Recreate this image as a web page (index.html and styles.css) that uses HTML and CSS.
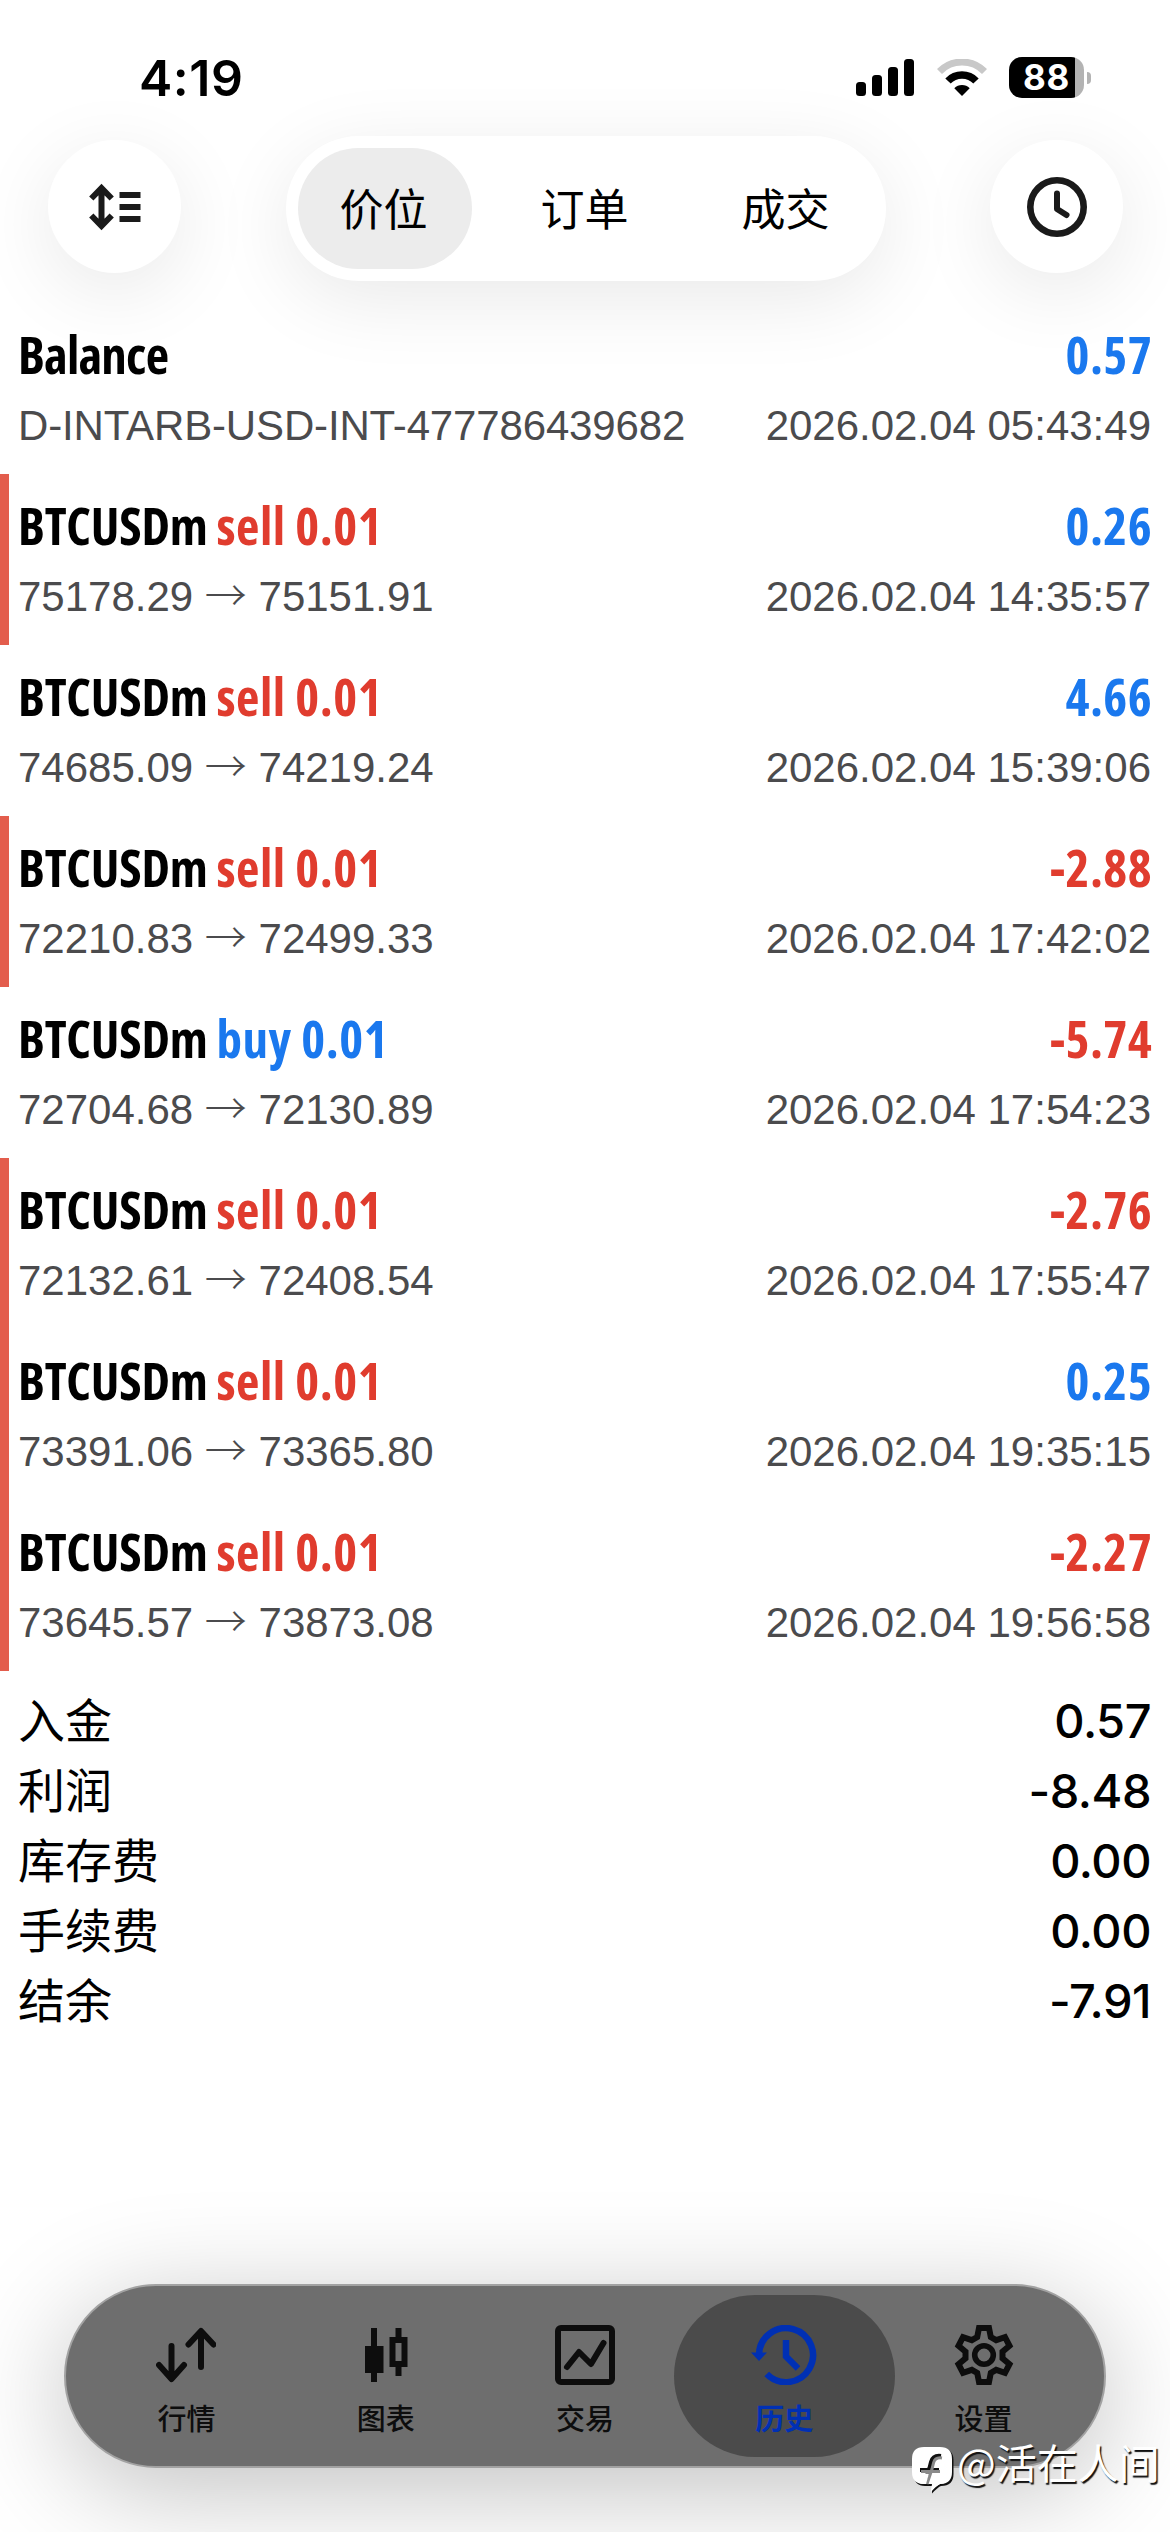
FILE: index.html
```html
<!DOCTYPE html>
<html lang="zh-CN">
<head>
<meta charset="utf-8">
<title>历史</title>
<link rel="stylesheet" href="styles.css">
</head>
<body>
<div class="phone">
  <div class="status">
    <span class="time">4:19</span>
    <div class="status-icons">
      <svg class="signal" width="58" height="37" viewBox="0 0 58 37"><rect x="0" y="23" width="10" height="14" rx="3.500"/><rect x="16" y="16" width="10" height="21" rx="3.500"/><rect x="32" y="8" width="10" height="29" rx="3.500"/><rect x="48" y="0" width="10" height="37" rx="3.500"/></svg>
      <svg class="wifi" width="50" height="37" viewBox="0 0 50 37"><path d="M2.500 12.500A31.500 31.500 0 0 1 47.500 12.500" fill="none" stroke="#c8c8c8" stroke-width="7"/><path d="M11 22A19.500 19.500 0 0 1 39 22" fill="none" stroke="#000" stroke-width="7.500"/><path d="M25 37L17.300 29.200A11 11 0 0 1 32.700 29.200Z"/></svg>
      <div class="battery"><div class="cell"><span class="pct">88</span></div><i class="nub"></i></div>
    </div>
  </div>

  <header class="topbar">
    <button class="round"><svg width="52" height="48" viewBox="0 0 52 48"><path d="M12.500 4V44M2.300 15.500L12.500 5L22.700 15.500M2.300 32.500L12.500 43L22.700 32.500" fill="none" stroke="#1a1a1a" stroke-width="6"/><path d="M30.500 9h21v6h-21zM30.500 21h21v6h-21zM30.500 33h21v6h-21z" fill="#1a1a1a"/></svg></button>
    <nav class="segments"><span class="seg on">价位</span><span class="seg">订单</span><span class="seg">成交</span></nav>
    <button class="round"><svg width="60" height="60" viewBox="0 0 60 60"><circle cx="30" cy="30" r="26.700" fill="none" stroke="#1a1a1a" stroke-width="6.600"/><path d="M30 16.500V32L39.500 38" fill="none" stroke="#1a1a1a" stroke-width="6" stroke-linecap="round" stroke-linejoin="round"/></svg></button>
  </header>

  <main class="deals">
    <div class="deal"><div class="line main"><span class="kind">Balance</span><span class="pos">0.57</span></div><div class="line sub"><span class="ref">D-INTARB-USD-INT-477786439682</span><span>2026.02.04 05:43:49</span></div></div>
    <div class="deal mark"><div class="line main"><span>BTCUSDm <em class="neg">sell 0.01</em></span><span class="pos">0.26</span></div><div class="line sub"><span>75178.29 <i class="to">→</i> 75151.91</span><span>2026.02.04 14:35:57</span></div></div>
    <div class="deal"><div class="line main"><span>BTCUSDm <em class="neg">sell 0.01</em></span><span class="pos">4.66</span></div><div class="line sub"><span>74685.09 <i class="to">→</i> 74219.24</span><span>2026.02.04 15:39:06</span></div></div>
    <div class="deal mark"><div class="line main"><span>BTCUSDm <em class="neg">sell 0.01</em></span><span class="neg">-2.88</span></div><div class="line sub"><span>72210.83 <i class="to">→</i> 72499.33</span><span>2026.02.04 17:42:02</span></div></div>
    <div class="deal"><div class="line main"><span>BTCUSDm <em class="pos">buy 0.01</em></span><span class="neg">-5.74</span></div><div class="line sub"><span>72704.68 <i class="to">→</i> 72130.89</span><span>2026.02.04 17:54:23</span></div></div>
    <div class="deal mark"><div class="line main"><span>BTCUSDm <em class="neg">sell 0.01</em></span><span class="neg">-2.76</span></div><div class="line sub"><span>72132.61 <i class="to">→</i> 72408.54</span><span>2026.02.04 17:55:47</span></div></div>
    <div class="deal mark"><div class="line main"><span>BTCUSDm <em class="neg">sell 0.01</em></span><span class="pos">0.25</span></div><div class="line sub"><span>73391.06 <i class="to">→</i> 73365.80</span><span>2026.02.04 19:35:15</span></div></div>
    <div class="deal mark"><div class="line main"><span>BTCUSDm <em class="neg">sell 0.01</em></span><span class="neg">-2.27</span></div><div class="line sub"><span>73645.57 <i class="to">→</i> 73873.08</span><span>2026.02.04 19:56:58</span></div></div>
  </main>

  <section class="summary">
    <div class="total"><span>入金</span><b>0.57</b></div>
    <div class="total"><span>利润</span><b>-8.48</b></div>
    <div class="total"><span>库存费</span><b>0.00</b></div>
    <div class="total"><span>手续费</span><b>0.00</b></div>
    <div class="total"><span>结余</span><b>-7.91</b></div>
  </section>

  <nav class="tabs">
    <a class="tab"><svg width="60" height="60" viewBox="0 0 60 60"><g fill="none" stroke="#0d0d0d" stroke-width="6" stroke-linecap="round" stroke-linejoin="round"><path d="M15.500 21V53M3 40L15.500 54L28 40M45 42V7M32.500 19.500L45 6L57.500 19.500"/></g></svg><span>行情</span></a>
    <a class="tab"><svg width="60" height="60" viewBox="0 0 60 60"><path d="M15 3h6v18h6.500v27H21v9h-6v-9H9V21h6z" fill="#0d0d0d"/><path fill-rule="evenodd" d="M39.500 3h6v9h6v30h-6v9h-6v-9h-6V12h6zM39.500 18v18h6V18z" fill="#0d0d0d"/></svg><span>图表</span></a>
    <a class="tab"><svg width="60" height="60" viewBox="0 0 60 60"><rect x="3" y="3" width="54" height="54" rx="3" fill="none" stroke="#0d0d0d" stroke-width="6"/><path d="M12 42L24 27L36 39L48.500 18" fill="none" stroke="#0d0d0d" stroke-width="6" stroke-linecap="round" stroke-linejoin="round"/></svg><span>交易</span></a>
    <a class="tab on"><svg width="66" height="60" viewBox="0 0 66 60"><path d="M8 30A27 27 0 1 1 15.700 49" fill="none" stroke="#0030b4" stroke-width="6.500"/><path d="M0 27.500H16L8 36Z" fill="#0030b4"/><path d="M35 15V31.500L47 43.500" fill="none" stroke="#0030b4" stroke-width="6.500"/></svg><span>历史</span></a>
    <a class="tab"><svg width="60" height="60" viewBox="0 0 60 60"><path d="M25 3H35L36.800 12L42.200 15.200L51 12.200L55.500 20.800L48.500 26.700V33.300L55.500 39.200L51 47.800L42.200 44.800L36.800 48L35 57H25L23.200 48L17.800 44.800L9 47.800L4.500 39.200L11.500 33.300V26.700L4.500 20.800L9 12.200L17.800 15.200L23.200 12Z" fill="none" stroke="#0d0d0d" stroke-width="6"/><circle cx="30" cy="30" r="9.300" fill="none" stroke="#0d0d0d" stroke-width="5.600"/></svg><span>设置</span></a>
  </nav>

  <div class="watermark">
    <svg width="44" height="48" viewBox="0 0 44 48"><path d="M13 3.500H29Q41.500 3.500 41.500 15V29Q41.500 41 29 41Q26 42 20 48.500L20 41H13Q2 41 1.500 29V15Z" fill="#111"/><path d="M12 2H28Q40 2 40 14V27Q40 39 28 39Q24 41 19 47L20 39H12Q0 39 0 27V14Q0 2 12 2Z" fill="#fff"/><path d="M29 11Q21 10 19 17L17.500 23L13 36M8 25H27" fill="none" stroke="#111" stroke-width="4"/><path d="M30 13Q23 12 21.500 18L20 24L15 39M9 26.500H28" fill="none" stroke="#8a8a8a" stroke-width="3"/><path d="M9 28.500H17L14 39H12Q5 39 2 33V28.500ZM22 28.500H38V31Q36 39 28 39Q24 41 19 46Z" fill="#fff"/></svg>
    <span>@活在人间</span>
  </div>
</div>
</body>
</html>
```
FILE: styles.css
```css
* { box-sizing: border-box; }
body { margin: 0; background: #fff; }
.phone {
  position: relative;
  width: 1170px;
  height: 2532px;
  overflow: hidden;
  display: flex;
  flex-direction: column;
  background: #fff;
  color: #000;
  font-family: Inter, "Noto Sans CJK SC", sans-serif;
}
.status {
  height: 136px;
  padding: 57px 79px 0 139px;
  display: flex;
  justify-content: space-between;
  align-items: flex-start;
}
.time { font-size: 50px; font-weight: 600; line-height: 42px; letter-spacing: .5px; }
.status-icons { display: flex; align-items: center; height: 41px; }
.wifi { margin: 0 22px 0 23px; }
.battery { display: flex; align-items: center; gap: 3px; }
.cell {
  width: 75px;
  height: 41px;
  border-radius: 13px;
  background: linear-gradient(90deg, #000 66px, #b3b3b3 66px);
  color: #fff;
  padding-left: 14px;
}
.pct { font-size: 35px; font-weight: 700; line-height: 41px; letter-spacing: .8px; }
.nub { width: 4px; height: 12px; border-radius: 0 4px 4px 0; background: #b3b3b3; }

.topbar {
  height: 145px;
  padding: 0 47px 0 48px;
  display: flex;
  justify-content: space-between;
  align-items: flex-start;
}
.round {
  width: 133px;
  height: 133px;
  margin: 4px 0 0;
  padding: 0;
  border: 0;
  border-radius: 50%;
  background: #fff;
  box-shadow: 0 18px 80px rgba(0, 0, 0, .09);
  display: grid;
  place-items: center;
}
.segments {
  width: 600px;
  height: 145px;
  padding: 12px;
  border-radius: 73px;
  background: #fff;
  box-shadow: 0 18px 80px rgba(0, 0, 0, .09);
  display: flex;
  justify-content: space-between;
}
.seg {
  width: 174px;
  height: 121px;
  padding-right: 2px;
  border-radius: 61px;
  font-size: 44px;
  line-height: 124px;
  text-align: center;
}
.seg.on { background: #ececec; }

.deals { margin-top: 22px; }
.deal {
  height: 171px;
  padding: 21px 19px 0 9px;
  border-left: 9px solid transparent;
}
.deal.mark { border-left-color: #e35d4d; }
.line { display: flex; justify-content: space-between; white-space: nowrap; }
.main {
  height: 60px;
  font: 700 51px/60px "Open Sans", sans-serif;
  font-stretch: 75%;
  letter-spacing: -.2px;
}
.main .kind { letter-spacing: -.8px; }
.main em { font-style: normal; letter-spacing: .5px; }
.main > .pos, .main > .neg { letter-spacing: .4px; margin-right: -1px; }
.sub {
  height: 52px;
  margin-top: 16px;
  font: 42px/52px "Liberation Sans", "Noto Sans CJK SC", sans-serif;
  color: #4b4b4d;
}
.ref { letter-spacing: -.15px; }
.to { font: 300 42px/1px "Noto Sans CJK SC", sans-serif; }
.pos { color: #1a78ee; }
.neg { color: #e03c2e; }

.summary { margin-top: 15px; padding: 0 19px 0 18px; }
.total {
  height: 70px;
  display: flex;
  justify-content: space-between;
  font-size: 47px;
  line-height: 70px;
}
.total b { font-weight: 500; letter-spacing: -.5px; }

.tabs {
  width: 1042px;
  height: 184px;
  margin: auto auto 64px 64px;
  padding: 9px 10px 0;
  border: 2px solid #a2a2a2;
  border-radius: 92px;
  background: #6e6e6e;
  box-shadow: 0 22px 110px rgba(0, 0, 0, .25);
  display: flex;
  justify-content: space-between;
}
.tab {
  width: 221px;
  height: 162px;
  margin-right: -21.500px;
  padding-top: 30px;
  border-radius: 81px;
  display: flex;
  flex-direction: column;
  align-items: center;
  color: #0d0d0d;
  font-size: 29px;
  font-weight: 500;
  line-height: 36px;
}
.tab:last-child { margin-right: 0; }
.tab svg { display: block; }
.tab span { margin-top: 17px; }
.tab.on { background: #4b4b4b; color: #0030b4; font-weight: 700; }

.watermark {
  position: absolute;
  left: 912px;
  top: 2445px;
  display: flex;
  gap: 1px;
  color: #fff;
  font: 400 41px/32px "Noto Sans CJK SC", sans-serif;
  text-shadow: 1.500px 1.500px 1px #111;
}
.watermark svg { overflow: visible; }
```
